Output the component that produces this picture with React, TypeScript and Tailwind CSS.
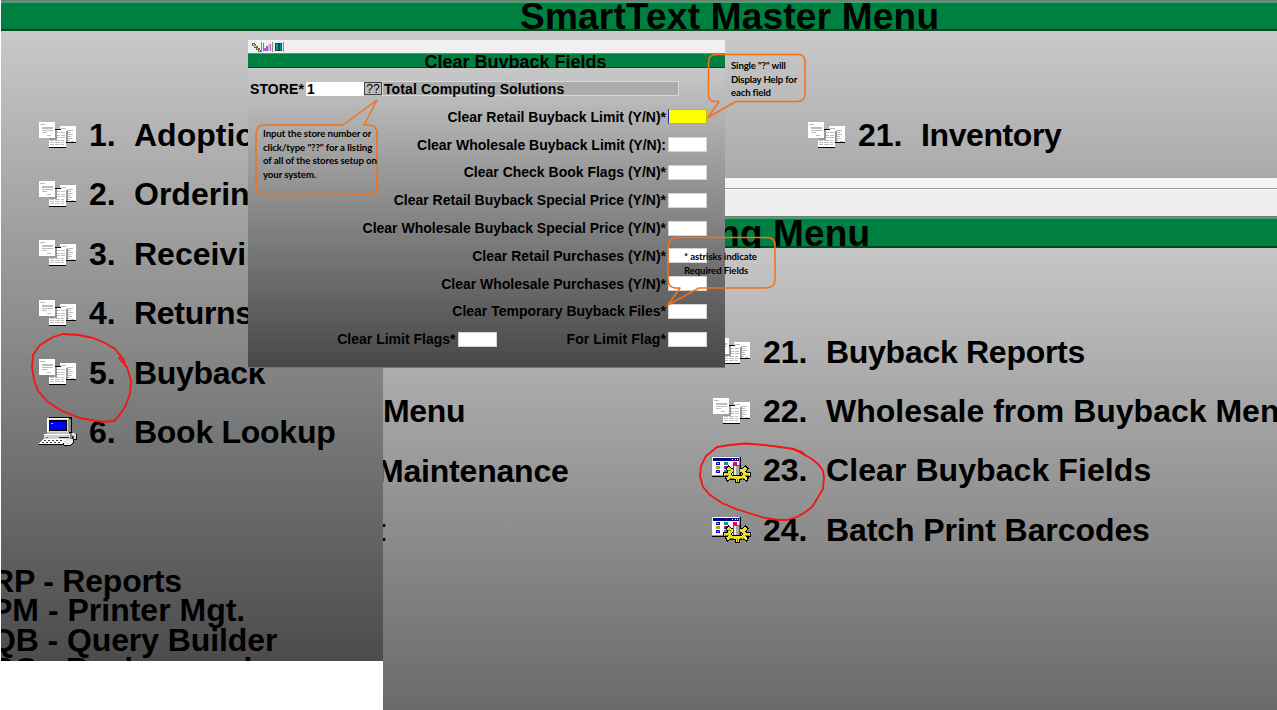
import React from "react";

const heading = "font-['Liberation_Sans',sans-serif] font-bold";

function Papers() {
  return (
    <svg width="38" height="27" viewBox="0 0 38 27" shapeRendering="crispEdges" className="block shrink-0">
      <path d="M21 4h16v16H21z" fill="#fff" />
      <path d="M27 20h10v1H27z" fill="#000" />
      <path d="M22 6h5v1h-5zM28 8h6v1h-6zM28 10h4v1h-4zM28 12h6v1h-6zM28 14h4v1h-4zM28 16h5v1h-5zM28 18h3v1h-3zM32 19h3v1h-3z" fill="#bdbdbd" />
      <path d="M10 8h17v17H10z" fill="#fff" />
      <path d="M10 25h17v1H10zM16 7h6v1h-6z" fill="#000" />
      <path d="M18 10h3v1h-3zM22 10h4v1h-4zM18 13h3v1h-3zM22 13h4v1h-4zM11 18h4v1h-4zM16 18h5v1h-5zM22 18h3v1h-3zM18 15h3v1h-3zM22 15h4v1h-4zM11 20h4v1h-4zM16 20h5v1h-5zM22 20h3v1h-3zM11 22h4v1h-4zM16 22h5v1h-5zM22 22h3v1h-3z" fill="#bdbdbd" />
      <path d="M16 8h2v10h-8v-2h6zM27 9h2v11h-2z" fill="#999" />
      <path d="M0 0h16v16H0z" fill="#fff" />
      <path d="M1 2h5v1H1zM3 5h11v2H3zM3 8h11v1H3zM3 10h5v1H3zM8 13h4v1H8z" fill="#bdbdbd" />
    </svg>
  );
}

function Computer() {
  return (
    <svg width="39" height="30" viewBox="0 0 39 30" shapeRendering="crispEdges" className="block shrink-0">
      <path d="M10 0h23v16H9V3h1z" fill="#000" />
      <path d="M8 1h21v15H8z" fill="#d8d8d8" />
      <path d="M8 1h22v1H8zM8 1h2v15H8z" fill="#fff" />
      <path d="M29 2h3v13h-3z" fill="#909090" />
      <path d="M10 3h18v11H10z" fill="#000" />
      <path d="M11 5h16v8H11z" fill="#0000ff" />
      <path d="M12 6h2v1h-2z" fill="#00ffff" />
      <path d="M8 15h22v2H8z" fill="#c0c0c0" />
      <path d="M5 17h29v7H5z" fill="#000" />
      <path d="M5 17h27v5H5z" fill="#d0d0d0" />
      <path d="M5 17h27v1H5z" fill="#fff" />
      <path d="M20 20h10v1H20z" fill="#222" />
      <path d="M31 17h2v6h-2z" fill="#808080" />
      <path d="M7 20h2v1H7z" fill="#00c000" />
      <path d="M4 22h24l-3 6H0z" fill="#000" />
      <path d="M4 22h23l-3 5H0z" fill="#fff" />
      <path d="M5 23h2v1H5zM9 23h2v1H9zM13 23h2v1h-2zM17 23h2v1h-2zM21 23h2v1h-2zM3 25h2v1H3zM7 25h2v1H7zM11 25h2v1h-2zM15 25h2v1h-2zM19 25h2v1h-2z" fill="#404040" />
      <path d="M33 16h3v1h1v5h-2v-3h-2z" fill="#d8d8d8" />
      <path d="M37 17h1v6h-3v-1h2z" fill="#111" />
      <path d="M25 24l3-2h7v3l-4 4h-6z" fill="#000" />
      <path d="M25 24l3-2h6v3l-3 3h-6z" fill="#e8e8e8" />
      <path d="M28 24h5v1h-5z" fill="#fff" />
    </svg>
  );
}

function WindowGear() {
  return (
    <svg width="40" height="28" viewBox="0 0 40 28" shapeRendering="crispEdges" className="-ml-0.5 block shrink-0">
      <path d="M1 1h29v20H1z" fill="#000" />
      <path d="M0 0h29v20H0z" fill="#909090" />
      <path d="M1 1h27v18H1z" fill="#fff" />
      <path d="M2 2h26v3H2z" fill="#000080" />
      <path d="M21 3h1v1h-1zM24 3h1v1h-1zM26 3h1v1h-1z" fill="#fff" />
      <path d="M5 6h4v3H5zM5 14h4v3H5z" fill="#0000e0" />
      <path d="M5 6h1v1H5zM8 14h1v1H8z" fill="#00c040" />
      <path d="M5 10h4v3H5z" fill="#b0a800" />
      <path d="M6 7h2v1H6zM6 15h2v1H6z" fill="#00d8e8" />
      <path d="M13 6h4v3h-4z" fill="#00a070" />
      <path d="M13 10h4v3h-4z" fill="#c000c0" />
      <path d="M13 14h4v3h-4z" fill="#0090b0" />
      <path d="M22 6h4v3h-4z" fill="#f00060" />
      <g fill="none" stroke="#000">
        <ellipse cx="26" cy="18" rx="8" ry="4" strokeWidth="5" />
        <path d="M12 18h6M34 18h6M16 11l4 4M36 11l-4 4M15 24l5-4M37 24l-5-4M26 21v6" strokeWidth="5" />
      </g>
      <g fill="none" stroke="#ece030">
        <ellipse cx="26" cy="18" rx="8" ry="4" strokeWidth="3" />
        <path d="M13 18h5M34 18h5M17 12l3 3M35 12l-3 3M16 23l4-3M36 23l-4-3M26 21v5" strokeWidth="3" />
      </g>
      <path d="M14 19h4v1h-4zM17 14h3v1h-3zM34 19h4v1h-4zM19 22h4v1h-4zM29 22h4v1h-4zM26 23h1v3h-1z" fill="#858000" />
      <path d="M22 9h7v10h-7z" fill="#555" />
      <path d="M23 10h2v9h-2z" fill="#e8e8e8" />
      <path d="M25 10h3v9h-3z" fill="#aaa" />
    </svg>
  );
}

type Kind = "papers" | "computer" | "gear";

function MenuItem({ icon, number, label, tracking = "" }: { icon: Kind; number: string; label: string; tracking?: string }) {
  return (
    <li className="flex h-[59.4px] items-center whitespace-pre">
      <span className="w-[50px] shrink-0">
        {icon === "papers" && <Papers />}
        {icon === "computer" && <Computer />}
        {icon === "gear" && <WindowGear />}
      </span>
      <span className={number.length > 2 ? "w-[63px] shrink-0" : "w-[45px] shrink-0"}>{number}</span>
      <span className={tracking}>{label}</span>
    </li>
  );
}

function MasterMenu() {
  return (
    <section className={`absolute left-px top-0 flex h-[661px] w-[1276px] flex-col overflow-hidden bg-[#787878] ${heading}`}>
      <div className="mt-px h-[30px] shrink-0 border-t-2 border-b-2 border-t-[#2fae70] border-b-[#004c18] bg-[#008040] text-[37px] leading-[27px]">
        <h1 className="pl-[519px] tracking-[0.22px] whitespace-nowrap">SmartText Master Menu</h1>
      </div>
      <div className="flex grow flex-col bg-linear-to-b from-[#c9c9c9] to-[#484848] text-[32px] leading-none">
        <div className="flex pt-[74.4px]">
          <ul className="w-[769px] pl-[38px]">
            <MenuItem icon="papers" number="1." label="Adoptions" />
            <MenuItem icon="papers" number="2." label="Ordering" />
            <MenuItem icon="papers" number="3." label="Receiving" />
            <MenuItem icon="papers" number="4." label="Returns" tracking="tracking-[-0.3px]" />
            <MenuItem icon="papers" number="5." label="Buyback" tracking="tracking-[-0.3px]" />
            <MenuItem icon="computer" number="6." label="Book Lookup" tracking="tracking-[-0.27px]" />
          </ul>
          <ul className="pl-[38px]">
            <MenuItem icon="papers" number="21." label="Inventory" tracking="tracking-[-0.4px]" />
          </ul>
        </div>
        <div className="-ml-[10px] mt-[105px] flex flex-col whitespace-nowrap leading-[29.4px]">
          <p className="tracking-[-0.2px]">RP - Reports</p>
          <p>PM - Printer Mgt.</p>
          <p className="tracking-[-0.1px]">QB - Query Builder</p>
          <p>BC - Background</p>
        </div>
      </div>
    </section>
  );
}

function BuybackMenu() {
  return (
    <section className={`absolute left-[383px] top-[178px] flex h-[532px] w-[894px] flex-col overflow-hidden ${heading}`}>
      <div className="h-[11px] shrink-0 border-b border-b-[#999] bg-[#f2f4f7]" />
      <div className="h-[28px] shrink-0 border-t border-b border-t-white border-b-[#777] bg-[#efefef]" />
      <div className="h-[31px] shrink-0 border-t-2 border-b-2 border-t-[#2fae70] border-b-[#004c18] bg-[#008040] text-[37px] leading-[30px]">
        <h2 className="pl-[177px] tracking-[0.12px] whitespace-nowrap">Purchasing Menu</h2>
      </div>
      <div className="flex grow bg-linear-to-b from-[#c6c6c6] to-[#6a6a6a] pt-[74px] text-[32px] leading-none">
        <ul className="w-[330px] shrink-0 whitespace-nowrap">
          <li className="h-[59.4px]" />
          <li className="flex h-[59.4px] items-center tracking-[-0.3px]">Menu</li>
          <li className="-ml-[6px] flex h-[59.4px] items-center pt-px tracking-[-0.2px]">Maintenance</li>
          <li className="-ml-[8px] flex h-[59.4px] items-center">t</li>
        </ul>
        <ul className="shrink-0">
          <MenuItem icon="papers" number="21." label="Buyback Reports" tracking="tracking-[-0.28px]" />
          <MenuItem icon="papers" number="22." label="Wholesale from Buyback Menu" />
          <MenuItem icon="gear" number="23." label="Clear Buyback Fields" tracking="tracking-[0.08px]" />
          <MenuItem icon="gear" number="24." label="Batch Print Barcodes" tracking="tracking-[-0.08px]" />
        </ul>
      </div>
    </section>
  );
}

function Field({ active = false }: { active?: boolean }) {
  return active ? (
    <span className="ml-[2px] h-[15px] w-[39px] shrink-0 border border-[#c8b800] border-l-[#2020c0] bg-[#ffff00]" />
  ) : (
    <span className="ml-[2px] h-[15px] w-[39px] shrink-0 border border-[#d4d4d4] bg-white" />
  );
}

const labels = [
  "Clear Retail Buyback Limit (Y/N)*",
  "Clear Wholesale Buyback Limit (Y/N):",
  "Clear Check Book Flags (Y/N)*",
  "Clear Retail Buyback Special Price (Y/N)*",
  "Clear Wholesale Buyback Special Price (Y/N)*",
  "Clear Retail Purchases (Y/N)*",
  "Clear Wholesale Purchases (Y/N)*",
  "Clear Temporary Buyback Files*",
];

function ClearDialog() {
  return (
    <section className={`absolute left-[248px] top-[40px] flex h-[328px] w-[477px] flex-col overflow-hidden border-b border-b-[#777] ${heading}`}>
      <div className="flex h-[13px] shrink-0 bg-[#f0f0f0] pl-[3px] pt-[2px]">
        <svg width="34" height="11" viewBox="0 0 34 11" shapeRendering="crispEdges">
          <path d="M1 1h3v1h1v2h2v2h2v2h1v2H7V8H5V6H3V4H1z" fill="#66663a" />
          <path d="M2 2h1v1H2zM4 4h1v1H4zM6 6h1v1H6zM8 8h1v1H8zM3 3h1v1H3z" fill="#ffff90" />
          <path d="M10 0h1v10h-1zM21 0h1v10h-1zM32 0h1v10h-1z" fill="#888" />
          <path d="M12 1h1v8h-1zM15 4h2v5h-2z" fill="#7070d0" />
          <path d="M13 6h2v3h-2zM19 2h1v7h-1z" fill="#f040e0" />
          <path d="M17 2h2v7h-2z" fill="#90e890" />
          <path d="M24 1h7v8h-7z" fill="#104848" />
          <path d="M25 2h2v6h-2zM29 2h1v6h-1z" fill="#00a0a0" />
        </svg>
      </div>
      <div className="h-[15px] shrink-0 border-t border-b border-t-[#2fae70] border-b-[#004c18] bg-[#008040]">
        <h2 className="pl-[176.500px] text-[18px] leading-[16px] whitespace-nowrap">Clear Buyback Fields</h2>
      </div>
      <div className="flex grow flex-col bg-linear-to-b from-[#c8c8c8] to-[#484848] pt-[13px] text-[14px] leading-none whitespace-nowrap">
        <div className="flex h-[15px] items-center pl-[2px]">
          <span className="w-[56px] tracking-[0.1px]">STORE*</span>
          <span className="h-[14px] w-[58px] bg-white pl-px leading-[15px]">1</span>
          <span className="h-[13px] w-[18px] border border-[#444] bg-[#bbb] text-center text-[12px] font-normal leading-[12px]">??</span>
          <span className="h-[15px] w-[297px] border border-[#d8d8d8] bg-[#acacac] pl-px leading-[14px] tracking-[0.1px]">Total Computing Solutions</span>
        </div>
        <div className="flex flex-col pt-[7px] pr-[18px]">
          {labels.map((label, i) => (
            <div key={label} className="flex h-[27.8px] items-center justify-end">
              <span>{label}</span>
              <Field active={i === 0} />
            </div>
          ))}
          <div className="flex h-[27.8px] items-center justify-end">
            <span>Clear Limit Flags*</span>
            <Field />
            <span className="ml-[70px] tracking-[0.1px]">For Limit Flag*</span>
            <Field />
          </div>
        </div>
      </div>
    </section>
  );
}

function Annotations() {
  return (
    <>
      <svg className="absolute left-0 top-0" width="1277" height="710" viewBox="0 0 1277 710" fill="none">
        <g stroke="#f47216" strokeWidth="1.5" strokeLinejoin="round">
          <path d="M264 125h79l34-25-13 25h4q9 0 9 9v52q0 9-9 9l-103 .5q-9 0-9-9v-52q0-9.500 8-9.500z" />
          <path d="M716 54.500h82q7 0 7 7v32q0 8-8 8h-61l-28 16 11-16h-4q-6.500 0-6.500-7V62q0-7.500 7.500-7.500z" />
          <path d="M677 237.500h90q8 0 8 8v34q0 8-9 8.500h-67l-31 17 12-17h-5q-7-1-7-9v-32q0-9 9-9.500z" />
        </g>
        <g stroke="#f51414" strokeWidth="1.8" strokeLinecap="round" strokeLinejoin="round">
          <path d="M125 366l-1-6-9-11-10-6-12-5-14-3-16-1-10 3-13 8-7 10-1 12 2 13 4 11 10 11 12 8 20 8 22 4 12-1 4-4 7-10 5-13 1-13-4-14-8-9M124 360l-4-4" />
          <path d="M717 447L730 445L746 443.500L764 445L780 447L794 449L803 454L812 459L819 465L823 471L824 478L823 489L817 499L812 507L804 513L797 517L787 520L778 520L765 518L752 514L736 509L722 503L710 495L703 487L700 476L701 466L706 456Z" />
          <path d="M790 448.500L801 451.500L805 455" />
        </g>
      </svg>
      <p className="absolute left-[263px] top-[127px] font-['Lato',sans-serif] text-[9.7px] font-bold leading-[13.5px] tracking-[-0.1px] whitespace-nowrap">
        Input the store number or<br />click/type "??" for a listing<br />of all of the stores setup on<br />your system.
      </p>
      <p className="absolute left-[731px] top-[59px] font-['Lato',sans-serif] text-[9.6px] font-bold leading-[13.5px] tracking-[-0.15px] whitespace-nowrap">
        Single "?" will<br />Display Help for<br />each field
      </p>
      <p className="absolute left-[684px] top-[250px] font-['Lato',sans-serif] text-[9.6px] font-bold leading-[13.5px] tracking-[-0.1px] whitespace-nowrap">
        * astrisks indicate<br />Required Fields
      </p>
    </>
  );
}

export default function App() {
  return (
    <main className="relative h-[710px] w-[1277px] overflow-hidden bg-white text-black">
      <MasterMenu />
      <BuybackMenu />
      <ClearDialog />
      <Annotations />
    </main>
  );
}
